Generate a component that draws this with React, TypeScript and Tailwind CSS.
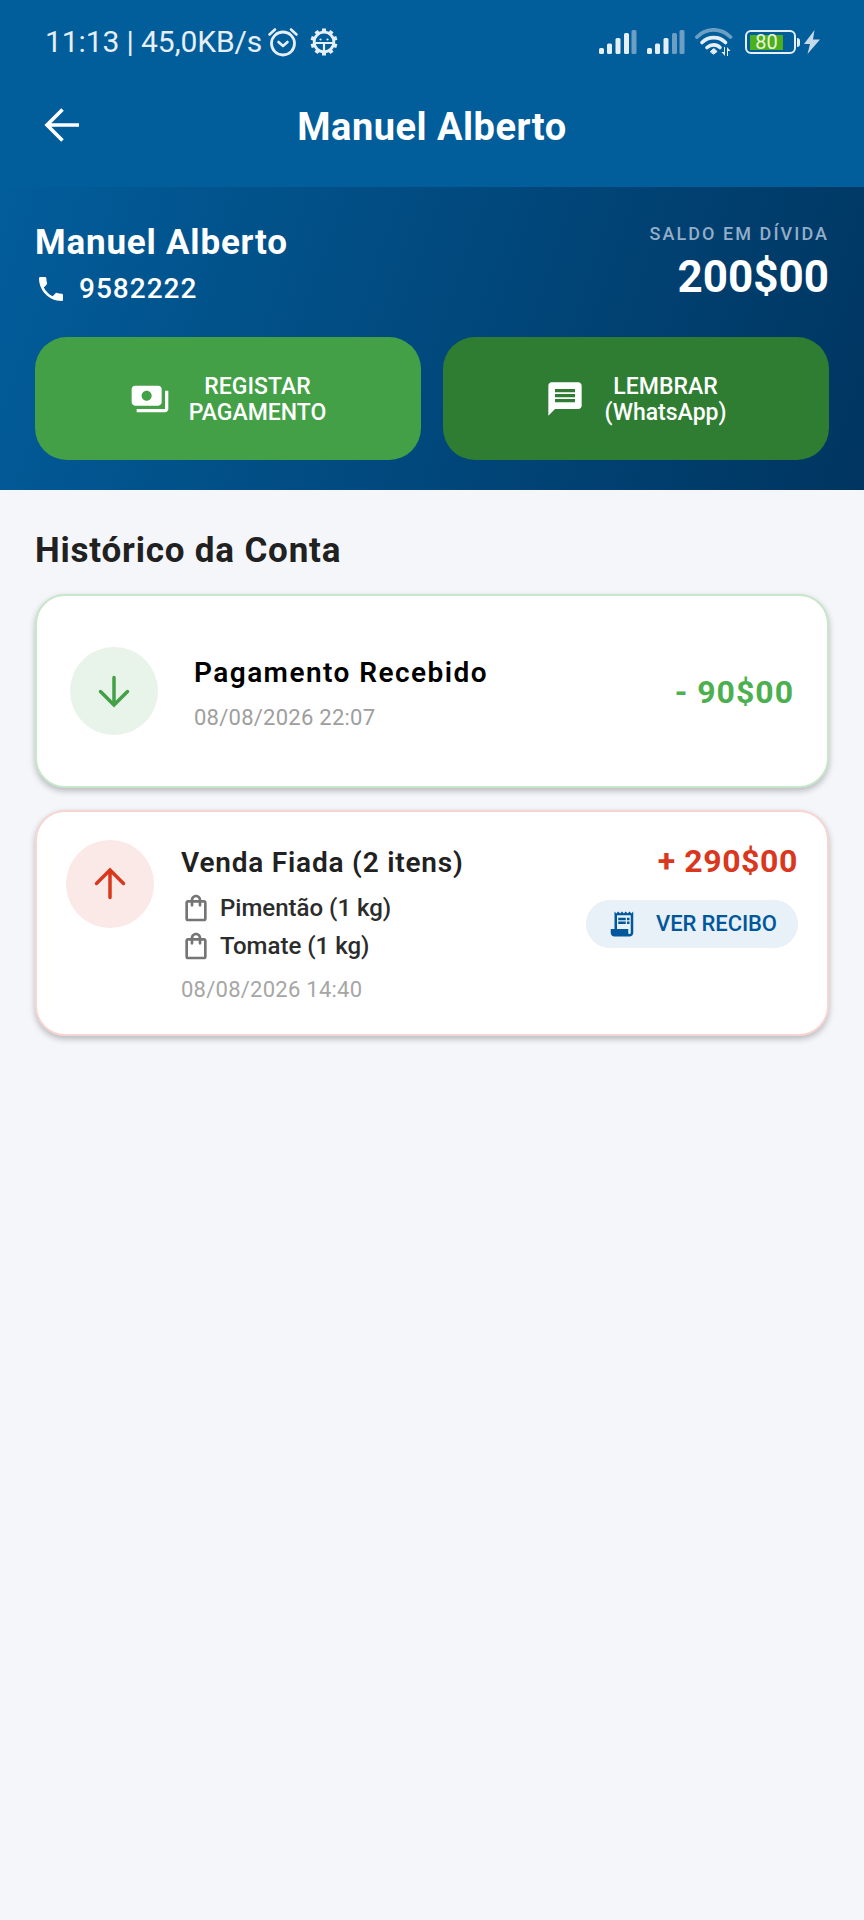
const font = { fontFamily: "Roboto, sans-serif" };

function Alarm() {
  return (
    <svg width="32" height="30" viewBox="0 0 32 30" fill="none" stroke="#e6eff6" strokeLinecap="round">
      <circle cx="16" cy="16.5" r="11.5" strokeWidth="2.8" />
      <path d="M11.5 15l4.5 4 4.5-4" strokeWidth="2.6" strokeLinejoin="round" />
      <path d="M2.5 7.5L8 2.5M29.5 7.5L24 2.5" strokeWidth="2.6" />
    </svg>
  );
}

function RobotGear() {
  const teeth = [0, 36, 72, 108, 144, 180, 216, 252, 288, 324];
  return (
    <svg width="28" height="28" viewBox="0 0 28 28" fill="none" stroke="#e6eff6">
      <circle cx="14" cy="14" r="9.800" strokeWidth="2.800" />
      {teeth.map((a) => (
        <rect key={a} x="12" y="0.5" width="4" height="3.500" fill="#e6eff6" stroke="none" transform={`rotate(${a} 14 14)`} />
      ))}
      <path d="M5 15h18M14 15v8" strokeWidth="2.200" />
      <circle cx="10.500" cy="11.500" r="1.100" fill="#e6eff6" stroke="none" />
      <circle cx="17.500" cy="11.500" r="1.100" fill="#e6eff6" stroke="none" />
    </svg>
  );
}

function Signal({ bright }: { bright: number }) {
  const bars = [
    { x: 0, y: 18 },
    { x: 8, y: 13.5 },
    { x: 16.5, y: 8 },
    { x: 25, y: 3 },
    { x: 32.5, y: 0 },
  ];
  return (
    <svg width="38" height="24" viewBox="0 0 38 24">
      {bars.map((b, i) => (
        <rect key={b.x} x={b.x} y={b.y} width="5" height={24 - b.y} rx="1.5" fill={i < bright ? "#e6eff6" : "#6d9ec3"} />
      ))}
    </svg>
  );
}

function Wifi() {
  return (
    <svg width="38" height="28" viewBox="0 0 38 28" fill="none" strokeLinecap="round">
      <path d="M2 9C11-.5 26-.5 35.500 9" stroke="#6d9ec3" strokeWidth="3.800" />
      <path d="M7 14.500C13.500 8 24 8 30.500 14.500" stroke="#e6eff6" strokeWidth="3.600" />
      <path d="M12 19.500C16 16 21.500 16 25 19.500" stroke="#e6eff6" strokeWidth="3.600" />
      <path d="M15.500 23.500l3.300-3 3.300 3-3.300 2.500z" fill="#e6eff6" stroke="#e6eff6" strokeWidth="1" />
      <path d="M29 19v5h-2.500l3.500 4V19zM33 28v-5h2.500L32 19v9z" fill="#e6eff6" />
    </svg>
  );
}

function Battery() {
  return (
    <div className="flex items-center">
      <div className="flex h-[24px] w-[51px] items-center rounded-[6px] border-2 border-[#e6eff6] pl-[3px]">
        <div className="flex h-[15px] w-[33px] items-center justify-center bg-[#4caf1e] text-[20px] leading-none text-[#e8f7d8]">
          80
        </div>
      </div>
      <div className="ml-[1px] h-[9px] w-[3px] rounded-r-sm bg-[#e6eff6]" />
    </div>
  );
}

function Bolt() {
  return (
    <svg width="16" height="24" viewBox="0 0 16 24">
      <path d="M10.500 0L0 14h6l-2.500 10L16 9.500H9z" fill="#c6d9e8" />
    </svg>
  );
}

function StatusBar() {
  return (
    <div className="flex h-[84px] items-center justify-between pl-[45px] pr-[44px]">
      <div className="flex items-center text-[30px] leading-none tracking-[-0.1px] text-[#e6eff6]">
        <span>11:13 | 45,0KB/s</span>
        <div className="ml-[5px]">
          <Alarm />
        </div>
        <div className="ml-[11px]">
          <RobotGear />
        </div>
      </div>
      <div className="flex items-center">
        <Signal bright={4} />
        <div className="ml-[10px]">
          <Signal bright={3} />
        </div>
        <div className="ml-[10px]">
          <Wifi />
        </div>
        <div className="ml-[12px]">
          <Battery />
        </div>
        <div className="ml-[4px]">
          <Bolt />
        </div>
      </div>
    </div>
  );
}

function Header() {
  return (
    <header className="h-[187px] bg-[#025d9b]">
      <StatusBar />
      <div className="relative flex h-[86px] items-center justify-center">
        <svg
          className="absolute left-[43px] top-[22px]"
          width="38"
          height="38"
          viewBox="0 0 38 38"
          fill="none"
          stroke="#fff"
          strokeWidth="3.600"
        >
          <path d="M36 19H5M19.500 3.500L4 19l15.500 15.500" />
        </svg>
        <h1 className="text-[38px] font-bold leading-none tracking-[0.5px] text-white">Manuel Alberto</h1>
      </div>
    </header>
  );
}

function ActionButton({ bg, icon, lines }: { bg: string; icon: React.ReactNode; lines: string[] }) {
  return (
    <button className={`flex h-[123px] flex-1 items-center justify-center gap-[19px] rounded-[32px] ${bg}`}>
      {icon}
      <span className="pt-[2px] text-center text-[23px] font-medium leading-[26px] text-white">
        {lines[0]}
        <br />
        {lines[1]}
      </span>
    </button>
  );
}

function ClientPanel() {
  return (
    <section className="h-[303px] bg-[linear-gradient(109deg,#025d9b,#003560)] px-[35px] pt-[36px]">
      <div className="flex h-[114px] items-start justify-between">
        <div>
          <div className="text-[35px] font-bold leading-[40px] tracking-[0.8px] text-white">Manuel Alberto</div>
          <div className="mt-[10px] flex items-center gap-[12px]">
            <svg width="32" height="32" viewBox="0 0 24 24" fill="#fff">
              <path d="M6.620 10.790c1.440 2.830 3.760 5.140 6.590 6.590l2.200-2.200c.270-.270.670-.360 1.020-.240 1.120.370 2.330.570 3.570.570.550 0 1 .450 1 1V20c0 .550-.450 1-1 1-9.390 0-17-7.610-17-17 0-.550.450-1 1-1h3.500c.550 0 1 .450 1 1 0 1.250.200 2.450.570 3.570.110.350.030.740-.250 1.020l-2.200 2.200z" />
            </svg>
            <span className="text-[28px] font-medium leading-[32px] tracking-[1px] text-white">9582222</span>
          </div>
        </div>
        <div className="-mt-[1px] flex flex-col items-end">
          <div className="text-[18px] font-medium leading-[24px] tracking-[2.050px] text-[#93aec8]">SALDO EM DÍVIDA</div>
          <div className="mt-[7px] text-[44px] font-bold leading-[48px] text-white">200$00</div>
        </div>
      </div>
      <div className="flex gap-[22px]">
        <ActionButton
          bg="bg-[#43a047]"
          lines={["REGISTAR", "PAGAMENTO"]}
          icon={
            <svg width="40" height="40" viewBox="0 0 24 24" fill="#fff">
              <path d="M19 14V6c0-1.100-.900-2-2-2H3c-1.100 0-2 .900-2 2v8c0 1.100.900 2 2 2h14c1.100 0 2-.900 2-2zm-9-1c-1.660 0-3-1.340-3-3s1.340-3 3-3 3 1.340 3 3-1.340 3-3 3zm13-6v11c0 1.100-.900 2-2 2H4v-2h17V7h2z" />
            </svg>
          }
        />
        <ActionButton
          bg="bg-[#2e7d32]"
          lines={["LEMBRAR", "(WhatsApp)"]}
          icon={
            <svg width="40" height="40" viewBox="0 0 24 24" fill="#fff">
              <path d="M20 2H4c-1.100 0-1.990.900-1.990 2L2 22l4-4h14c1.100 0 2-.900 2-2V4c0-1.100-.900-2-2-2zm-2 12H6v-2h12v2zm0-3H6V9h12v2zm0-3H6V6h12v2z" />
            </svg>
          }
        />
      </div>
    </section>
  );
}

function Bag() {
  return (
    <svg width="32" height="32" viewBox="0 0 24 24" fill="#757575">
      <path d="M18 6h-2c0-2.210-1.790-4-4-4S8 3.790 8 6H6c-1.100 0-2 .900-2 2v12c0 1.100.900 2 2 2h12c1.100 0 2-.900 2-2V8c0-1.100-.900-2-2-2zm-6-2c1.100 0 2 .900 2 2h-4c0-1.100.900-2 2-2zm6 16H6V8h2v2c0 .550.450 1 1 1s1-.450 1-1V8h4v2c0 .550.450 1 1 1s1-.450 1-1V8h2v12z" />
    </svg>
  );
}

function PaymentCard() {
  return (
    <div className="flex h-[194px] items-center rounded-[30px] border-2 border-[#c8e6c9] bg-white pl-[33px] pr-[33px] shadow-[0_3px_6px_rgba(0,0,0,0.25)]">
      <div className="flex h-[88px] w-[88px] items-center justify-center rounded-full bg-[#e8f3ea]">
        <svg width="36" height="36" viewBox="0 0 36 36" fill="none" stroke="#43a047" strokeWidth="3.500" strokeLinecap="round">
          <path d="M18 4.500V32M4.500 18.500L18 32l13.500-13.500" />
        </svg>
      </div>
      <div className="ml-[36px] flex-1 pt-[6px]">
        <div className="text-[28px] font-semibold leading-[34px] tracking-[1.450px] text-black">Pagamento Recebido</div>
        <div className="mt-[14px] text-[22px] leading-[28px] tracking-[0.250px] text-[#9e9e9e]">08/08/2026 22:07</div>
      </div>
      <div className="pt-[1px] text-[32px] font-bold leading-[40px] tracking-[1px] text-[#4caf50]">- 90$00</div>
    </div>
  );
}

function SaleCard() {
  return (
    <div className="flex h-[226px] items-start rounded-[30px] border-2 border-[#f7d5d2] bg-white pl-[29px] pr-[29px] pt-[28px] shadow-[0_3px_6px_rgba(0,0,0,0.25)]">
      <div className="flex h-[88px] w-[88px] shrink-0 items-center justify-center rounded-full bg-[#fae9e7]">
        <svg width="36" height="36" viewBox="0 0 36 36" fill="none" stroke="#d9381e" strokeWidth="3.500" strokeLinecap="round">
          <path d="M18 31.500V4M4.500 17.500L18 4l13.500 13.500" />
        </svg>
      </div>
      <div className="ml-[27px] flex-1 pt-[6px]">
        <div className="text-[28px] font-semibold leading-[34px] tracking-[0.800px] text-[#212121]">Venda Fiada (2 itens)</div>
        <div className="-ml-[1px] mt-[12px] flex flex-col gap-[6px]">
          {["Pimentão (1 kg)", "Tomate (1 kg)"].map((item) => (
            <div key={item} className="flex h-[32px] items-center gap-[8px]">
              <Bag />
              <span className="text-[24px] font-medium leading-[32px] text-[#2c2c2c]">{item}</span>
            </div>
          ))}
        </div>
        <div className="mt-[14px] text-[22px] leading-[28px] tracking-[0.250px] text-[#a6a6a6]">08/08/2026 14:40</div>
      </div>
      <div className="flex flex-col items-end pt-[1px]">
        <div className="text-[32px] font-bold leading-[40px] tracking-[0.600px] text-[#d9381e]">+ 290$00</div>
        <button className="mt-[19px] flex h-[48px] w-[212px] items-center justify-center gap-[19px] rounded-full bg-[#e8f0f8]">
          <svg width="30" height="30" viewBox="0 0 24 24" fill="#01579b">
            <path
              fillRule="evenodd"
              d="M19.500 3.500L18 2l-1.500 1.500L15 2l-1.500 1.500L12 2l-1.500 1.500L9 2 7.500 3.500 6 2v14H3v3c0 1.660 1.340 3 3 3h12c1.660 0 3-1.340 3-3V2l-1.500 1.500zM8 5h11v14c0 .550-.450 1-1 1s-1-.450-1-1v-3H8z"
            />
            <path d="M9 7h6v2H9zm7 0h2v2h-2zm-7 3h6v2H9zm7 0h2v2h-2z" />
          </svg>
          <span className="text-[22px] font-medium leading-none tracking-[-0.1px] text-[#01579b]">VER RECIBO</span>
        </button>
      </div>
    </div>
  );
}

export default function App() {
  return (
    <div className="min-h-[1920px] bg-[#f4f6fa]" style={font}>
      <Header />
      <ClientPanel />
      <main className="px-[35px] pt-[39px]">
        <h2 className="text-[35px] font-bold leading-[44px] tracking-[0.8px] text-[#212121]">Histórico da Conta</h2>
        <div className="mt-[21px] flex flex-col gap-[22px]">
          <PaymentCard />
          <SaleCard />
        </div>
      </main>
    </div>
  );
}
